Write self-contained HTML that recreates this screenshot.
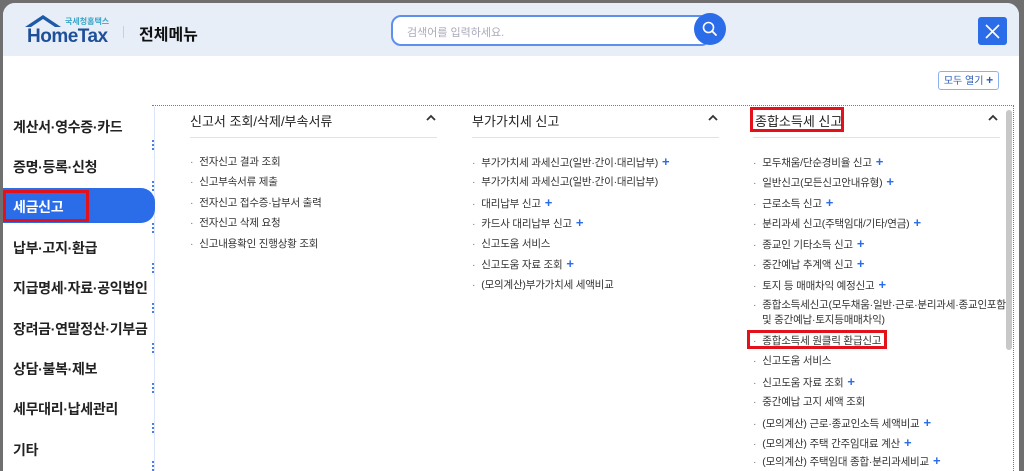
<!DOCTYPE html>
<html style="overflow:hidden;width:1024px;height:471px"><head><meta charset="utf-8"><style>
*{margin:0;padding:0;box-sizing:border-box}
body{width:1024px;height:471px;overflow:hidden;background:#6f6f6f;font-family:"Liberation Sans","Noto Sans CJK KR",sans-serif;position:relative}
#panel{position:absolute;left:3px;top:3px;width:1016px;height:468px;background:#fff;border-radius:12px 12px 0 0;overflow:hidden}
#head{position:absolute;left:0;top:0;width:100%;height:53px;background:#e7eef8}
.a{position:absolute;white-space:nowrap}
.lm{position:absolute;left:10px;font-size:14px;font-weight:bold;color:#222;letter-spacing:-0.3px}
.it{position:absolute;font-size:10.5px;color:#333;white-space:nowrap;letter-spacing:-0.2px}
.it:before{content:"·";color:#777;margin-right:6px}
.pl{color:#2b6de8;font-weight:bold;font-size:13px;margin-left:4px}
.hd{position:absolute;font-size:13px;color:#222;top:108px}
.car{position:absolute;top:111px}
.ln{position:absolute;top:134px;height:1px;background:#e2e2e2}
.dv{position:absolute;left:149px;width:3px;height:10px;border-left:2px dotted #4a7fe0}
</style></head><body>
<div id="panel">
<div id="head"></div>
<svg class="a" style="left:22px;top:11px" width="44" height="14" viewBox="0 0 44 14"><path d="M0 13 L18 1 L36 13 L30 13 L18 5 L6 13Z" fill="#1e5aa8"/></svg>
<div class="a" style="left:62px;top:13px;font-size:8px;color:#3aa6c9;font-weight:bold">국세청홈택스</div>
<div class="a" style="left:24px;top:23px;font-size:19px;font-weight:bold;color:#1e4f98;letter-spacing:-0.5px">HomeTax</div>
<div class="a" style="left:120px;top:23px;width:1px;height:12px;background:#c9cfd8"></div>
<div class="a" style="left:136px;top:18px;font-size:16px;font-weight:bold;color:#111">전체메뉴</div>
<div class="a" style="left:388px;top:12px;width:320px;height:31px;border:2px solid #5f8fec;border-radius:10px;background:#fff"></div>
<div class="a" style="left:404px;top:21px;font-size:11px;color:#aab">검색어를 입력하세요.</div>
<div class="a" style="left:691px;top:10px;width:32px;height:32px;border-radius:50%;background:#2b6de8"></div>
<svg class="a" style="left:698px;top:17px" width="18" height="18" viewBox="0 0 18 18"><circle cx="7.5" cy="7.5" r="5" fill="none" stroke="#fff" stroke-width="1.6"/><path d="M11 11 L15 15" stroke="#fff" stroke-width="1.8" stroke-linecap="round"/></svg>
<div class="a" style="left:975px;top:14px;width:29px;height:28px;border-radius:3px;background:#2b6de8"></div>
<svg class="a" style="left:981px;top:20px" width="17" height="17" viewBox="0 0 17 17"><path d="M2 2 L15 15 M15 2 L2 15" stroke="#fff" stroke-width="1.6"/></svg>
<div class="a" style="left:935px;top:68px;width:61px;height:19px;border:1px solid #8fb0ee;border-radius:3px;font-size:10px;color:#2d5cb8;line-height:17px;text-align:center">모두 열기 <b style="font-size:12px">+</b></div>
<div class="a" style="left:149px;top:102px;width:862px;height:366px;border-top:1px dotted #4a7fe0;border-right:1px dotted #4a7fe0"></div>
<div class="a" style="left:151px;top:104px;width:1px;height:364px;background:#dce6fb"></div>
<div class="dv" style="top:137px"></div><div class="dv" style="top:178px"></div><div class="dv" style="top:220px"></div><div class="dv" style="top:260px"></div><div class="dv" style="top:300px"></div><div class="dv" style="top:340px"></div><div class="dv" style="top:380px"></div><div class="dv" style="top:420px"></div><div class="dv" style="top:458px"></div>
<div class="a" style="left:0;top:185px;width:152px;height:35px;background:#2b6de8;border-radius:0 14px 14px 0"></div>
<div class="a" style="left:0;top:187px;width:86px;height:32px;border:3px solid #e3121a"></div>
<div class="lm" style="top:114px">계산서·영수증·카드</div>
<div class="lm" style="top:154px">증명·등록·신청</div>
<div class="lm" style="top:194px;color:#fff">세금신고</div>
<div class="lm" style="top:235px">납부·고지·환급</div>
<div class="lm" style="top:275px">지급명세·자료·공익법인</div>
<div class="lm" style="top:316px">장려금·연말정산·기부금</div>
<div class="lm" style="top:356px">상담·불복·제보</div>
<div class="lm" style="top:396px">세무대리·납세관리</div>
<div class="lm" style="top:437px">기타</div>
<div class="hd" style="left:187px">신고서 조회/삭제/부속서류</div>
<svg class="car" style="left:423px" width="10" height="7" viewBox="0 0 10 7"><path d="M1 6 L5 2 L9 6" fill="none" stroke="#333" stroke-width="1.8"/></svg>
<div class="ln" style="left:187px;width:247px"></div>
<div class="it" style="left:187px;top:151px">전자신고 결과 조회</div>
<div class="it" style="left:187px;top:171px">신고부속서류 제출</div>
<div class="it" style="left:187px;top:192px">전자신고 접수증·납부서 출력</div>
<div class="it" style="left:187px;top:212px">전자신고 삭제 요청</div>
<div class="it" style="left:187px;top:233px">신고내용확인 진행상황 조회</div>
<div class="hd" style="left:469px">부가가치세 신고</div>
<svg class="car" style="left:705px" width="10" height="7" viewBox="0 0 10 7"><path d="M1 6 L5 2 L9 6" fill="none" stroke="#333" stroke-width="1.8"/></svg>
<div class="ln" style="left:469px;width:247px"></div>
<div class="it" style="left:469px;top:151px">부가가치세 과세신고(일반·간이·대리납부)<span class="pl">+</span></div>
<div class="it" style="left:469px;top:171px">부가가치세 과세신고(일반·간이·대리납부)</div>
<div class="it" style="left:469px;top:192px">대리납부 신고<span class="pl">+</span></div>
<div class="it" style="left:469px;top:212px">카드사 대리납부 신고<span class="pl">+</span></div>
<div class="it" style="left:469px;top:233px">신고도움 서비스</div>
<div class="it" style="left:469px;top:253px">신고도움 자료 조회<span class="pl">+</span></div>
<div class="it" style="left:469px;top:274px">(모의계산)부가가치세 세액비교</div>
<div class="a" style="left:747px;top:104px;width:94px;height:25px;border:3px solid #e3121a"></div>
<div class="hd" style="left:752px">종합소득세 신고</div>
<svg class="car" style="left:985px" width="10" height="7" viewBox="0 0 10 7"><path d="M1 6 L5 2 L9 6" fill="none" stroke="#333" stroke-width="1.8"/></svg>
<div class="ln" style="left:750px;width:247px"></div>
<div class="it" style="left:750px;top:151px">모두채움/단순경비율 신고<span class="pl">+</span></div>
<div class="it" style="left:750px;top:171px">일반신고(모든신고안내유형)<span class="pl">+</span></div>
<div class="it" style="left:750px;top:192px">근로소득 신고<span class="pl">+</span></div>
<div class="it" style="left:750px;top:212px">분리과세 신고(주택임대/기타/연금)<span class="pl">+</span></div>
<div class="it" style="left:750px;top:233px">종교인 기타소득 신고<span class="pl">+</span></div>
<div class="it" style="left:750px;top:253px">중간예납 추계액 신고<span class="pl">+</span></div>
<div class="it" style="left:750px;top:274px">토지 등 매매차익 예정신고<span class="pl">+</span></div>
<div class="it" style="left:750px;top:294px">종합소득세신고(모두채움·일반·근로·분리과세·종교인포함</div>
<div class="a" style="left:759px;top:309px;font-size:10.5px;color:#333;letter-spacing:-0.2px">및 중간예납·토지등매매차익)</div>
<div class="a" style="left:744px;top:327px;width:140px;height:19px;border:3px solid #e3121a"></div>
<div class="it" style="left:750px;top:330px">종합소득세 원클릭 환급신고</div>
<div class="it" style="left:750px;top:350px">신고도움 서비스</div>
<div class="it" style="left:750px;top:371px">신고도움 자료 조회<span class="pl">+</span></div>
<div class="it" style="left:750px;top:391px">중간예납 고지 세액 조회</div>
<div class="it" style="left:750px;top:412px">(모의계산) 근로·종교인소득 세액비교<span class="pl">+</span></div>
<div class="it" style="left:750px;top:432px">(모의계산) 주택 간주임대료 계산<span class="pl">+</span></div>
<div class="it" style="left:750px;top:450px">(모의계산) 주택임대 종합·분리과세비교<span class="pl">+</span></div>
<div class="a" style="left:1003px;top:107px;width:6px;height:240px;background:#c8c8c8;border-radius:3px"></div>
</div>
</body></html>
